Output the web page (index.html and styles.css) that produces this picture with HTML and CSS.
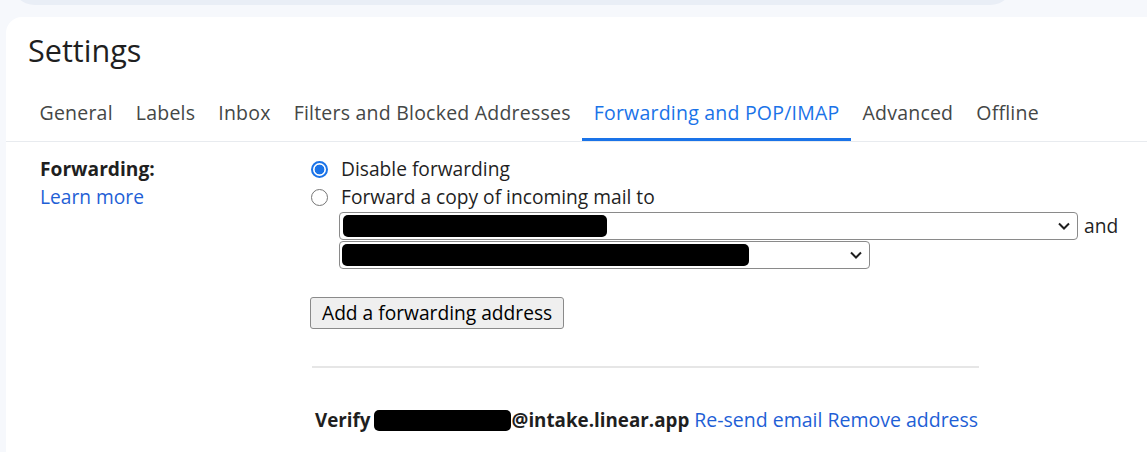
FILE: index.html
```html
<!DOCTYPE html>
<html lang="en">
<head>
<meta charset="utf-8">
<title>Settings</title>
<link rel="stylesheet" href="styles.css">
</head>
<body>
<div class="search"></div>
<main class="card">
  <h1 class="title">Settings</h1>
  <nav class="tabs">
    <a class="tab">General</a>
    <a class="tab">Labels</a>
    <a class="tab">Inbox</a>
    <a class="tab">Filters and Blocked Addresses</a>
    <a class="tab active">Forwarding and POP/IMAP</a>
    <a class="tab">Advanced</a>
    <a class="tab">Offline</a>
  </nav>
  <section class="setting">
    <div class="label-col">
      <div class="label">Forwarding:</div>
      <a class="link">Learn more</a>
    </div>
    <div class="options">
      <label class="option"><span class="radio checked"></span>Disable forwarding</label>
      <label class="option"><span class="radio"></span>Forward a copy of incoming mail to</label>
      <div class="select-line">
        <div class="select select-wide">
          <span class="redact redact-a"></span>
          <svg class="chev" width="14" height="10" viewBox="0 0 14 10"><path d="M2 2.5l5 5 5-5" fill="none" stroke="#1f1f1f" stroke-width="2"/></svg>
        </div>
        <span class="and">and</span>
      </div>
      <div class="select-line">
        <div class="select select-narrow">
          <span class="redact redact-b"></span>
          <svg class="chev" width="14" height="10" viewBox="0 0 14 10"><path d="M2 2.5l5 5 5-5" fill="none" stroke="#1f1f1f" stroke-width="2"/></svg>
        </div>
      </div>
      <button class="btn">Add a forwarding address</button>
      <div class="sep"></div>
      <div class="verify"><b>Verify</b><span class="redact redact-c"></span><b>@intake.linear.app</b> <a class="link">Re-send email</a> <a class="link">Remove address</a></div>
    </div>
  </section>
</main>
</body>
</html>
```

FILE: styles.css
```css
html, body {
  margin: 0;
  padding: 0;
}
body {
  width: 1147px;
  height: 452px;
  overflow: hidden;
  background: #f6f8fc;
  font-family: "Open Sans", "Noto Sans", sans-serif;
  color: #1f1f1f;
}
.search {
  width: 1003px;
  height: 48px;
  margin: -43px 0 0 11px;
  background: #e9eef6;
  border-radius: 24px;
}
.card {
  margin: 12px -40px 0 6px;
  height: 440px;
  background: #fff;
  border-top-left-radius: 16px;
}
.title {
  margin: 0;
  padding: 13px 0 0 22px;
  font-size: 30.6px;
  line-height: 40px;
  font-weight: 400;
  color: #1f1f1f;
}
.tabs {
  display: flex;
  margin-top: 18px;
  padding-left: 22px;
  border-bottom: 1px solid #e8ebef;
}
.tab {
  padding: 13px 11.5px 13px;
  font-size: 19.5px;
  letter-spacing: 0.22px;
  line-height: 24px;
  color: #444746;
  border-bottom: 3px solid transparent;
  white-space: nowrap;
}
.tab.active {
  color: #1a73e8;
  border-bottom-color: #1a73e8;
}
.setting {
  display: flex;
  padding: 13px 0 0 34px;
  font-size: 19.2px;
  line-height: 28px;
}
.label-col {
  width: 270px;
  flex: none;
  display: flex;
  flex-direction: column;
  align-items: flex-start;
}
.label {
  font-weight: 700;
}
.link {
  color: #1f5fd6;
}
.options {
  display: flex;
  flex-direction: column;
  align-items: flex-start;
}
.option {
  display: flex;
  align-items: center;
  height: 28px;
}
.radio {
  box-sizing: border-box;
  width: 17px;
  height: 17px;
  margin: 1px 13px 0 1px;
  border: 1.5px solid #767676;
  border-radius: 50%;
  background: #fff;
}
.radio.checked {
  border: 2px solid #1a73e8;
  background: radial-gradient(circle, #1a73e8 0 4.6px, #fff 5.2px);
}
.select-line {
  display: flex;
  align-items: center;
  padding-left: 29px;
  margin-top: 1px;
}
.select {
  box-sizing: border-box;
  height: 28px;
  display: flex;
  align-items: center;
  justify-content: space-between;
  padding: 0 6px 0 3px;
  border: 1px solid #8a8a8a;
  border-radius: 4px;
  background: #fff;
}
.select-wide { width: 739px; }
.select-narrow { width: 531px; padding-left: 2px; }
.chev {
  flex: none;
}
.redact {
  display: inline-block;
  height: 22px;
  background: #000;
  border-radius: 5px;
}
.redact-a { width: 264px; }
.redact-b { width: 407px; }
.redact-c { width: 137px; height: 21px; margin: 0 1px 0 3px; vertical-align: -4px; }
.and {
  margin-left: 6px;
}
.btn {
  margin-top: 28px;
  height: 32px;
  padding: 0 11px;
  font-family: "Open Sans", "Noto Sans", sans-serif;
  font-size: 19.2px;
  line-height: 30px;
  color: #000;
  background: #efefef;
  border: 1px solid #8a8a8a;
  border-radius: 3px;
}
.sep {
  width: 667px;
  height: 2px;
  margin: 37px 0 0 2px;
  background: #e6e6e6;
}
.verify {
  margin-top: 38px;
  padding-left: 5px;
  white-space: nowrap;
}
.verify b {
  font-weight: 700;
  font-size: 18.8px;
}
.verify .link {
  font-size: 19.5px;
}
```
